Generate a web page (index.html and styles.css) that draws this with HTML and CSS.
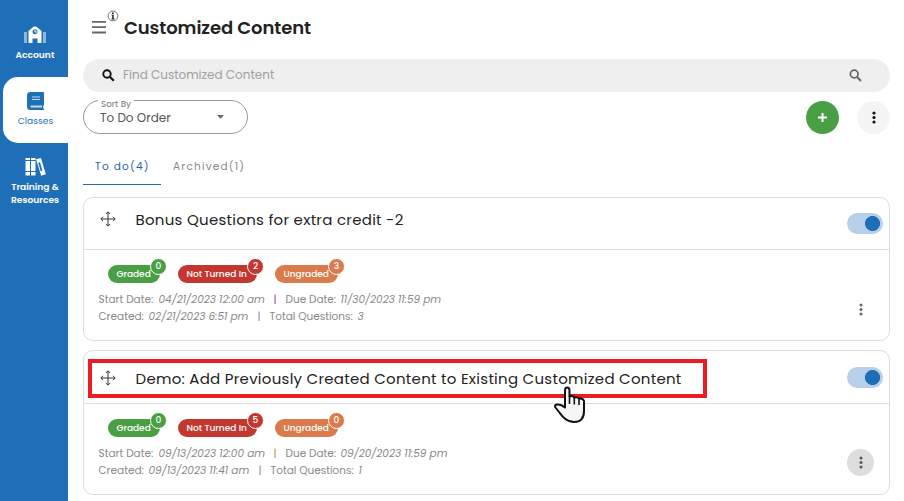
FILE: index.html
```html
<!DOCTYPE html>
<html lang="en">
<head>
  <meta charset="UTF-8">
  <title>Customized Content</title>
  <link rel="stylesheet" href="styles.css">
</head>
<body>

<nav class="sidebar">
  <a class="nav-item account">
    <svg width="24" height="20" viewBox="0 0 24 20">
      <path fill="#fff" fill-opacity=".5" d="M1 7h3v11H1zM20 7h3v11h-3z"/>
      <path fill="#fff" fill-rule="evenodd" d="M5.500 6L9 3Q12 .2 15 3l3.500 3v12h-4v-4.500h-5V18h-4zM12 4.200a2.500 2.500 0 1 0 .01 0z"/>
      <path stroke="#fff" fill="none" d="M12 4.700v2.300h1.800"/>
    </svg>
    <span>Account</span>
  </a>
  <a class="nav-item classes">
    <svg width="17" height="18" viewBox="0 0 17 18">
      <path fill="#1f6fb8" d="M3.500 0H16q1 0 1 1v12l-.8 1v2.500l.8.500v1H3.500A3.500 3.500 0 0 1 0 14.500v-11A3.500 3.500 0 0 1 3.500 0z"/>
      <path fill="#fff" d="M5 4.500h8v1.100H5zM5 7h8v1.100H5zM3.500 13.500H15v2H3.500z" fill-opacity=".75"/>
    </svg>
    <span>Classes</span>
  </a>
  <a class="nav-item training">
    <svg width="22" height="20" viewBox="0 0 22 20">
      <path fill="#fff" d="M1.500 1h4.500v2H1.500zM1.500 4h4.500v10H1.500zM1.500 15h4.500v3.500H1.500zM7 1h4.500v2H7zM7 4h4.500v10H7zM7 15h4.500v3.500H7z"/>
      <path fill="#fff" fill-rule="evenodd" d="M12 2.300l5-1.300 4.800 16.200-4.600 1.500zM14.200 5.800l2.500 8.500 1.700-.5L16 5.300z"/>
    </svg>
    <span>Training &amp;<br>Resources</span>
  </a>
</nav>

<main class="content">
  <header class="page-head">
    <svg class="menu" width="14" height="14" viewBox="0 0 14 14"><path stroke="#666" stroke-width="1.800" d="M0 1.800h14M0 7.200h14M0 12.500h14"/></svg>
    <svg class="info" width="12" height="12" viewBox="0 0 12 12">
      <circle cx="6" cy="6" r="4.900" fill="#fff" stroke="#555" stroke-width=".8"/>
      <path fill="#111" d="M5.100 2.400h1.600v1.500H5.100zM4.500 4.700h2.200v3.800h.8v.9h-3v-.9h.8v-2.900h-.8z"/>
    </svg>
    <h1><span>Customized Content</span></h1>
  </header>

  <div class="search">
    <svg width="13" height="13" viewBox="0 0 13 13"><circle cx="5" cy="5" r="3.700" fill="none" stroke="#111" stroke-width="1.900"/><path stroke="#111" stroke-width="2.200" d="M7.800 7.800l4 4"/></svg>
    <span class="placeholder">Find Customized Content</span>
    <svg width="13" height="13" viewBox="0 0 13 13"><circle cx="5.200" cy="5" r="3.900" fill="none" stroke="#666" stroke-width="1.700"/><path stroke="#666" stroke-width="2" d="M8 8l4 4"/></svg>
  </div>

  <div class="toolbar">
    <div class="select">
      <span class="select-label">Sort By</span>
      <span class="select-value">To Do Order</span>
      <svg width="7" height="4" viewBox="0 0 7 4"><path fill="#666" d="M0 0h7L3.500 3.800z"/></svg>
    </div>
    <button class="round add"><svg width="9" height="9" viewBox="0 0 9 9"><path stroke="#fff" stroke-width="2" d="M4.500 0v9M0 4.500h9"/></svg></button>
    <button class="round more"><svg width="4" height="13" viewBox="0 0 4 13"><g fill="#111"><circle cx="2" cy="2" r="1.600"/><circle cx="2" cy="6.500" r="1.600"/><circle cx="2" cy="11" r="1.600"/></g></svg></button>
  </div>

  <div class="tabs">
    <a class="tab active">To do(4)</a>
    <a class="tab">Archived(1)</a>
  </div>

  <section class="card first">
    <div class="card-head">
      <svg class="move" width="16" height="16" viewBox="0 0 16 16"><path fill="none" stroke="#333" d="M8 1v14M1 8h14M5.800 3L8 .8l2.200 2.200M5.800 13L8 15.200l2.200-2.200M3 5.800L.8 8l2.200 2.200M13 5.800L15.200 8l-2.200 2.200"/></svg>
      <h2>Bonus Questions for extra credit -2</h2>
      <span class="toggle"></span>
    </div>
    <div class="card-body">
      <div class="badges">
        <span class="badge graded">Graded<b>0</b></span>
        <span class="badge missing">Not Turned In<b>2</b></span>
        <span class="badge ungraded">Ungraded<b>3</b></span>
      </div>
      <div class="meta"><span class="w60">Start Date:</span><i class="w115">04/21/2023 12:00 am</i><span class="bar purple">|</span><span class="w55">Due Date:</span><i>11/30/2023 11:59 pm</i></div>
      <div class="meta"><span class="w50">Created:</span><i class="w109">02/21/2023 6:51 pm</i><span class="bar">|</span><span class="w88">Total Questions:</span><i>3</i></div>
      <button class="dots"><svg width="4" height="13" viewBox="0 0 4 13"><g fill="#666"><circle cx="2" cy="2" r="1.500"/><circle cx="2" cy="6.500" r="1.500"/><circle cx="2" cy="11" r="1.500"/></g></svg></button>
    </div>
  </section>

  <section class="card second">
    <div class="card-head">
      <svg class="move" width="16" height="16" viewBox="0 0 16 16"><path fill="none" stroke="#333" d="M8 1v14M1 8h14M5.800 3L8 .8l2.200 2.200M5.800 13L8 15.200l2.200-2.200M3 5.800L.8 8l2.200 2.200M13 5.800L15.200 8l-2.200 2.200"/></svg>
      <h2>Demo: Add Previously Created Content to Existing Customized Content</h2>
      <span class="toggle"></span>
      <div class="highlight"></div>
      <svg class="cursor" width="32" height="38" viewBox="0 0 32 38">
        <path fill="#f5f5f5" stroke="#111" stroke-width="2" stroke-linejoin="round" d="M11 21.500V4.500Q11 1.500 13.200 1.500T15.500 4.500V10.500Q19 9 20 11.500Q23.500 10.500 25 12.500Q29 12 30 15V25C30 33 26 36 20 36C12 36 8 30 5 26L1.500 21.500Q0 19 3 18.500Q7 18 11 21.500z"/>
        <path stroke="#111" stroke-width="1.600" fill="none" d="M15.500 10v8M20.300 12v6.500M25 13v6"/>
      </svg>
    </div>
    <div class="card-body">
      <div class="badges">
        <span class="badge graded">Graded<b>0</b></span>
        <span class="badge missing">Not Turned In<b>5</b></span>
        <span class="badge ungraded">Ungraded<b>0</b></span>
      </div>
      <div class="meta"><span class="w60">Start Date:</span><i class="w115">09/13/2023 12:00 am</i><span class="bar orange">|</span><span class="w55">Due Date:</span><i>09/20/2023 11:59 pm</i></div>
      <div class="meta"><span class="w50">Created:</span><i class="w110">09/13/2023 11:41 am</i><span class="bar">|</span><span class="w88">Total Questions:</span><i>1</i></div>
      <button class="dots hover"><svg width="4" height="13" viewBox="0 0 4 13"><g fill="#555"><circle cx="2" cy="2" r="1.500"/><circle cx="2" cy="6.500" r="1.500"/><circle cx="2" cy="11" r="1.500"/></g></svg></button>
    </div>
  </section>
</main>

</body>
</html>
```

FILE: styles.css
```css
* {
  box-sizing: border-box;
}
body {
  margin: 0;
  height: 501px;
  display: flex;
  overflow: hidden;
  background: #fff;
  font-family: Poppins, Inter, "Open Sans", sans-serif;
  color: #222;
}
svg {
  display: block;
  flex: none;
}
h1, h2 {
  margin: 0;
  white-space: nowrap;
}
button {
  border: none;
  padding: 0;
  display: flex;
  align-items: center;
  justify-content: center;
  border-radius: 50%;
}
.sidebar {
  width: 68px;
  flex: none;
  background: #1f6fb8;
  padding-top: 11px;
}
.nav-item {
  height: 66px;
  padding: 14px 0 0 2px;
  display: flex;
  flex-direction: column;
  align-items: center;
  gap: 3px;
  color: #fff;
  font-size: 9.1px;
  font-weight: 600;
  line-height: 13px;
  text-align: center;
}
.nav-item.classes {
  margin-left: 3px;
  padding: 15px 0 0 0;
  background: #fff;
  border-radius: 15px 0 0 15px;
  color: #1f6fb8;
  font-weight: 400;
  gap: 4px;
}
.nav-item.training {
  height: 70px;
}
.content {
  flex: none;
  width: 807px;
  margin-left: 15px;
}
.page-head {
  height: 59px;
  display: flex;
  align-items: flex-start;
  padding-left: 9px;
}
.menu {
  margin-top: 20px;
}
.info {
  margin: 10px 5px 0 1px;
}
h1 {
  font-size: 18px;
  font-weight: 600;
  line-height: 26px;
  margin-top: 15px;
  letter-spacing: -0.08px;
}
.search {
  height: 33px;
  border-radius: 17px;
  background: #efefef;
  display: flex;
  align-items: center;
  padding: 0 28px 0 19px;
}
.placeholder {
  flex: 1;
  margin: -2px 0 0 8px;
  font-size: 12px;
  color: #a0a0a0;
}
.toolbar {
  margin-top: 9px;
  display: flex;
  align-items: center;
}
.select {
  position: relative;
  width: 165px;
  height: 34px;
  border: 1px solid #999;
  border-radius: 17px;
  display: flex;
  align-items: center;
  justify-content: space-between;
  padding: 0 23px 0 16px;
  margin: -1px auto 0 0;
}
.select-label {
  position: absolute;
  left: 14px;
  top: -3px;
  padding: 0 3px;
  background: #fff;
  color: #777;
  font-size: 8.800px;
  line-height: 12px;
}
.select-value {
  padding-top: 2px;
  font-size: 12px;
  color: #555;
}
.round {
  width: 33px;
  height: 33px;
  margin-top: -1px;
}
.add {
  background: #4a9f45;
  margin-right: 18px;
}
.more {
  background: #f4f4f4;
}
.tabs {
  display: flex;
  height: 51px;
}
.tab {
  height: 51px;
  padding: 26px 12px 0;
  font-size: 10.500px;
  line-height: 14px;
  font-weight: 400;
  letter-spacing: 1.200px;
  white-space: nowrap;
  color: #888;
}
.tab.active {
  width: 78px;
  color: #1f5fb0;
  border-bottom: 1px solid #1f6fb8;
}
.card {
  border: 1px solid #ddd;
  border-radius: 10px;
  height: 144px;
  margin-top: 12px;
}
.card.second {
  height: 145px;
  margin-top: 9px;
}
.card-head {
  position: relative;
  height: 52px;
  border-bottom: 1px solid #ddd;
  display: flex;
  align-items: flex-start;
  padding: 14px 6px 0 16px;
}
.card.second .card-head {
  height: 53px;
  padding-top: 20px;
}
h2 {
  flex: 1;
  margin: -4px 0 0 19.500px;
  font-size: 15px;
  font-weight: 400;
  line-height: 24px;
  letter-spacing: 0.270px;
}
.move {
  margin-top: -1px;
}
.toggle {
  width: 36px;
  height: 21px;
  margin-top: 1px;
  border-radius: 11px;
  background: radial-gradient(circle at 25.500px 10.500px, #1f6fb8 7.200px, #b7cfe8 7.800px);
}
.second .toggle {
  margin-top: -4px;
}
.highlight {
  position: absolute;
  left: 4px;
  top: 8px;
  width: 619px;
  height: 39px;
  border: 4px solid #ed1c24;
}
.cursor {
  position: absolute;
  left: 470px;
  top: 35px;
}
.card-body {
  position: relative;
  padding: 15px 0 0 14.500px;
}
.badges {
  display: flex;
  padding-left: 9.500px;
  margin-bottom: 8px;
}
.badge {
  position: relative;
  height: 18px;
  padding-left: 8.500px;
  border-radius: 9px;
  color: #fff;
  font-size: 9px;
  font-weight: 500;
  line-height: 18px;
  white-space: nowrap;
}
.badge b {
  position: absolute;
  right: -7px;
  top: -7px;
  width: 17px;
  height: 17px;
  border: 1px solid #fff;
  border-radius: 50%;
  background: inherit;
  font-size: 9px;
  font-weight: 500;
  line-height: 15px;
  text-align: center;
}
.graded {
  width: 52px;
  margin-right: 18px;
  background: #4a9f45;
}
.missing {
  width: 79px;
  margin-right: 18px;
  background: #c23730;
}
.ungraded {
  width: 63px;
  background: #d97b4a;
}
.meta {
  display: flex;
  height: 17px;
  line-height: 17px;
  font-size: 10.500px;
  color: #888;
  white-space: nowrap;
}
.w50 { width: 50px; }
.w55 { width: 55px; }
.w60 { width: 60px; }
.w88 { width: 88px; }
.w109 { width: 109px; }
.w110 { width: 110px; }
.w115 { width: 115px; }
.bar { width: 12px; }
.bar.purple { color: #863d96; }
.bar.orange { color: #c98a3a; }
.dots {
  position: absolute;
  right: 15px;
  top: 46px;
  width: 27px;
  height: 27px;
  background: none;
}
.dots.hover {
  top: 45px;
  background: #ddd;
}
```
